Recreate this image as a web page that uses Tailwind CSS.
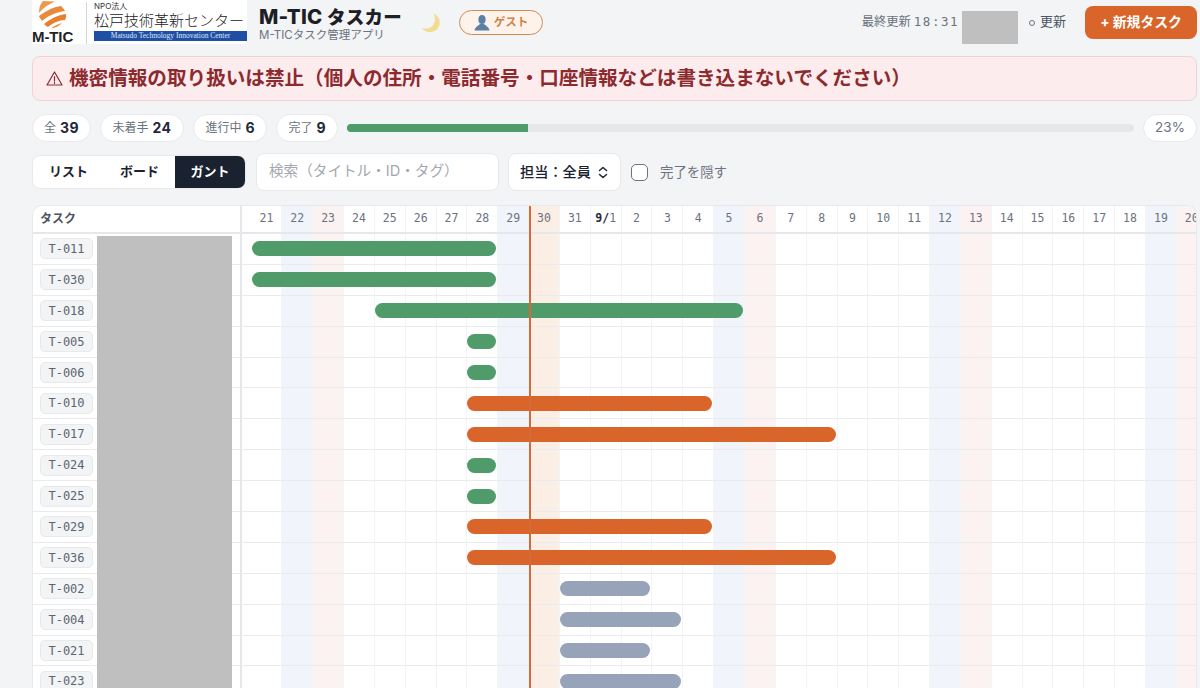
<!DOCTYPE html>
<html lang="ja">
<head>
  <meta charset="UTF-8">
  <title>M-TIC タスカー</title>
  <script src="https://cdn.jsdelivr.net/npm/@tailwindcss/browser@4"></script>
</head>
<body class="h-[688px] overflow-hidden bg-[#f3f4f5] font-['Inter','Noto_Sans_CJK_JP',sans-serif] text-[#1a2230]">
  <div class="relative h-[688px] overflow-hidden pl-[32px] pr-[3px]">

    <!-- ヘッダー -->
    <header class="flex h-[46px] items-start">
      <div class="flex h-[44px] w-[215px] bg-white">
        <div class="flex w-[54px] shrink-0 flex-col items-start">
          <svg class="ml-[5px] h-[29px] w-[30px]" viewBox="0 0 30 29">
            <path d="M6 1 L18 1.500 C12 4 6 8 2 13 C2 8 3 4 6 1Z" fill="#ec9a4e"/>
            <path d="M24 6 C26 8 27 9 28 11 C20 12 12 15 5 21 C4 19 2 17 2 16 C9 11 16 7 24 6Z" fill="#e98a3a"/>
            <path d="M29 14 C29.500 16 29 18 28 20 C22 20 16 23 11 27 C9 26 8 25 7 24 C13 19 21 15 29 14Z" fill="#e67f2e"/>
            <path d="M25 23 C22 26 18 28 14 28.500 C17 26 21 24 25 23Z" fill="#e8842c"/>
          </svg>
          <span class="mt-[1px] font-['Liberation_Sans',sans-serif] text-[15px] leading-[14px] font-bold tracking-[-0.1px] text-[#1f2328]">M-TIC</span>
        </div>
        <div class="mt-[2px] h-[42px] w-px bg-[#d5d6d3]"></div>
        <div class="ml-[7px] flex w-[153px] flex-col">
          <span class="mt-[1px] text-[8px] leading-[10px] text-[#333]">NPO法人</span>
          <span class="text-[15px] leading-[19px] font-light whitespace-nowrap text-[#222]">松戸技術革新センター</span>
          <span class="mt-[1px] h-[10px] bg-[#1f4fa5] text-center font-['Liberation_Serif',serif] text-[7.500px] leading-[10px] whitespace-nowrap text-[#dfe7f5]">Matsudo Technology Innovation Center</span>
        </div>
      </div>

      <div class="ml-[12px] flex w-[152px] flex-col pt-[5px]">
        <span class="text-[20.500px] leading-[23px] font-extrabold tracking-[0.2px] whitespace-nowrap text-[#1c2026]">M-TIC <span class="text-[18.500px]">タスカー</span></span>
        <span class="text-[11.500px] leading-[13px] whitespace-nowrap text-[#6b7280]">M-TICタスク管理アプリ</span>
      </div>

      <svg class="mt-[13px] ml-[10px] h-[20px] w-[20px]" viewBox="0 0 20 20">
        <path d="M12.500 0.500 C17 2.500 19.500 7 18.500 11.500 C17.500 16.500 12.500 19.800 7.500 19 C4.500 18.500 2.500 17 1 15 C6.500 16.500 10.500 15 12.500 11.500 C14.500 8 14.500 4 12.500 0.500Z" fill="#f1dd92"/>
      </svg>

      <div class="mt-[10px] ml-[18px] flex h-[25px] w-[84px] items-center justify-center gap-[4px] rounded-full border border-[#d28a55] bg-[#fdf3ea]">
        <svg class="h-[17px] w-[16px]" viewBox="0 0 16 17">
          <ellipse cx="8" cy="5.500" rx="3.600" ry="4.500" fill="#5b80a8"/>
          <path d="M0.500 16.500 C1 13 4 12 6 10 L10 10 C12 12 15 13 15.500 16.500Z" fill="#5b80a8"/>
        </svg>
        <span class="text-[11.500px] font-semibold text-[#d0824a]">ゲスト</span>
      </div>

      <div class="ml-auto flex items-start">
        <span class="mt-[13px] text-[12.300px] leading-[18px] text-[#6b7280]">最終更新</span>
        <span class="mt-[13px] ml-[3px] font-['DejaVu_Sans_Mono',monospace] text-[12.500px] leading-[18px] tracking-[1.500px] text-[#6b7280]">18:31</span>
        <div class="mt-[11px] ml-[3px] h-[33px] w-[56px] bg-[#bfbfbf]"></div>
        <span class="mt-[20px] ml-[11px] h-[6px] w-[6px] rounded-full border border-[#6b7280]"></span>
        <span class="mt-[11px] ml-[5px] text-[13px] leading-[20px] text-[#4b5563]">更新</span>
        <button class="mt-[6px] ml-[19px] flex h-[33px] w-[112px] items-center justify-center rounded-lg bg-[#d9652b] text-[13.800px] font-bold whitespace-nowrap text-white">+ 新規タスク</button>
      </div>
    </header>

    <!-- 注意書き -->
    <div class="mt-[10px] flex h-[45px] items-center rounded-lg border border-[#f0d4d5] bg-[#fcecee] pl-[13px] text-[#8d2a2e]">
      <svg class="h-[17px] w-[17px]" viewBox="0 0 17 17" fill="none" stroke="currentColor" stroke-width="1.200" stroke-linejoin="round">
        <path d="M8.500 2 L16 15 L1 15Z"/>
        <path d="M8.500 6.500 V11 M8.500 12.300 V13.300" stroke-linecap="round"/>
      </svg>
      <span class="ml-[6px] text-[19.600px] font-semibold whitespace-nowrap">機密情報の取り扱いは禁止（個人の住所・電話番号・口座情報などは書き込まないでください）</span>
    </div>

    <!-- 集計 -->
    <div class="mt-[12px] flex h-[29px] items-center">
      <div class="flex h-[28px] w-[59px] items-center justify-center gap-[4px] rounded-full border border-[#e8e9eb] bg-white text-[12px] text-[#6b7280]">全 <b class="text-[14px] tracking-[0.5px] text-[#1f2937]">39</b></div>
      <div class="ml-[9px] flex h-[28px] w-[84px] items-center justify-center gap-[4px] rounded-full border border-[#e8e9eb] bg-white text-[12px] text-[#6b7280]">未着手 <b class="text-[14px] tracking-[0.5px] text-[#1f2937]">24</b></div>
      <div class="ml-[9px] flex h-[28px] w-[74px] items-center justify-center gap-[4px] rounded-full border border-[#e8e9eb] bg-white text-[12px] text-[#6b7280]">進行中 <b class="text-[14px] text-[#1f2937]">6</b></div>
      <div class="ml-[9px] flex h-[28px] w-[62px] items-center justify-center gap-[4px] rounded-full border border-[#e8e9eb] bg-white text-[12px] text-[#6b7280]">完了 <b class="text-[14px] text-[#1f2937]">9</b></div>
      <div class="mx-[9px] h-[8px] flex-1 rounded-full bg-[#e5e7eb]">
        <div class="h-full w-[23%] rounded-l-full bg-[#4f9b69]"></div>
      </div>
      <div class="flex h-[28px] w-[54px] items-center justify-center rounded-full border border-[#e8e9eb] bg-white text-[13.500px] text-[#6b7280]">23%</div>
    </div>

    <!-- ツールバー -->
    <div class="mt-[11px] flex h-[38px] items-center">
      <div class="flex h-[34px] w-[214px] overflow-hidden rounded-lg border border-[#e8e9eb] bg-white text-[13px] font-semibold">
        <span class="flex w-[71px] items-center justify-center">リスト</span>
        <span class="flex w-[71px] items-center justify-center">ボード</span>
        <span class="flex flex-1 items-center justify-center bg-[#1a2230] text-white">ガント</span>
      </div>
      <div class="ml-[10px] flex h-[38px] w-[243px] items-center rounded-lg border border-[#e8e9eb] bg-white pl-[12px] text-[14.600px] text-[#a3a8b0]">検索（タイトル・ID・タグ）</div>
      <div class="ml-[9px] flex h-[38px] w-[113px] items-center rounded-lg border border-[#e8e9eb] bg-white pl-[11px] text-[14.200px] font-medium">
        担当：全員
        <svg class="ml-[7px] h-[13px] w-[10px]" viewBox="0 0 10 13" fill="none" stroke="#1f2937" stroke-width="1.600" stroke-linecap="round" stroke-linejoin="round"><path d="M1.500 4.500 L5 1.500 L8.500 4.500 M1.500 8.500 L5 11.500 L8.500 8.500"/></svg>
      </div>
      <span class="ml-[10px] h-[17px] w-[17px] rounded-[5px] border border-[#6b7280] bg-white"></span>
      <span class="ml-[12px] text-[13.400px] text-[#6b7280]">完了を隠す</span>
    </div>

    <!-- ガント -->
    <div class="relative mt-[14px] w-[1165px] overflow-hidden rounded-t-[10px] border border-b-0 border-[#e8e9eb] bg-white" id="gantt">
      <div class="flex h-[28px] border-b-2 border-[#e5e7eb]">
        <div class="flex w-[209px] shrink-0 items-center border-r-2 border-[#e5e7eb] pl-[7px] text-[12px] font-bold text-[#4b5563]">タスク</div>
        <div class="w-[9.500px] shrink-0"></div>
        <div class="grid grid-cols-[repeat(31,30.85px)]" id="days"></div>
      </div>
      <div id="rows"></div>
      <!-- 今日の線 -->
      <div class="absolute top-0 bottom-0 left-[496px] w-[2px] bg-[#d4693a]"></div>
    </div>

    <!-- 名前のマスク -->
    <div class="absolute top-[236px] bottom-0 left-[97px] w-[135px] bg-[#bfbfbf]"></div>
  </div>

  <script>
    const days = [21,22,23,24,25,26,27,28,29,30,31,1,2,3,4,5,6,7,8,9,10,11,12,13,14,15,16,17,18,19,20];
    const sat = [22,29,5,12,19];
    const sun = [23,6,13,20];
    const tasks = [
      ["T-011", 0, 8, "g"], ["T-030", 0, 8, "g"], ["T-018", 4, 16, "g"],
      ["T-005", 7, 8, "g"], ["T-006", 7, 8, "g"], ["T-010", 7, 15, "o"],
      ["T-017", 7, 19, "o"], ["T-024", 7, 8, "g"], ["T-025", 7, 8, "g"],
      ["T-029", 7, 15, "o"], ["T-036", 7, 19, "o"], ["T-002", 10, 13, "b"],
      ["T-004", 10, 14, "b"], ["T-021", 10, 13, "b"], ["T-023", 10, 14, "b"]
    ];
    const barColor = { g: "bg-[#4f9b69]", o: "bg-[#d9652b]", b: "bg-[#97a3b8]" };

    function dayBg(d, i) {
      if (i === 9) return "bg-[#fbeee5]";
      if (i > 0 && sat.includes(d)) return "bg-[#f1f5fb]";
      if (sun.includes(d)) return "bg-[#fdf2f2]";
      return "bg-white";
    }

    document.getElementById("days").innerHTML = days.map((d, i) => {
      const label = d === 1 ? '<b class="text-[#1f2937]">9/</b>1' : d;
      return `<div class="flex items-center justify-center border-r border-[#f3f4f6] font-['DejaVu_Sans_Mono',monospace] text-[11.500px] text-[#6b7280] ${dayBg(d, i)}">${label}</div>`;
    }).join("");

    document.getElementById("rows").innerHTML = tasks.map(([id, from, to, color]) => {
      const cells = days.map((d, i) =>
        `<div class="row-start-1 border-r border-[#f3f4f6] ${dayBg(d, i)}" style="grid-column:${i + 1}"></div>`
      ).join("");
      return `<div class="flex h-[30.900px] border-b border-[#e9ebee]">
        <div class="flex w-[209px] shrink-0 items-center border-r-2 border-[#e5e7eb] pl-[7px]">
          <span class="flex h-[21px] w-[53px] items-center justify-center rounded-[5px] border border-[#e8e9eb] bg-[#f3f4f5] font-['DejaVu_Sans_Mono',monospace] text-[12px] text-[#5b6470]">${id}</span>
        </div>
        <div class="w-[9.500px] shrink-0"></div>
        <div class="grid grid-cols-[repeat(31,30.85px)]">
          ${cells}
          <div class="row-start-1 mr-[2px] h-[15px] self-center rounded-full ${barColor[color]}" style="grid-column:${from + 1} / ${to + 1}"></div>
        </div>
      </div>`;
    }).join("");
  </script>
</body>
</html>
